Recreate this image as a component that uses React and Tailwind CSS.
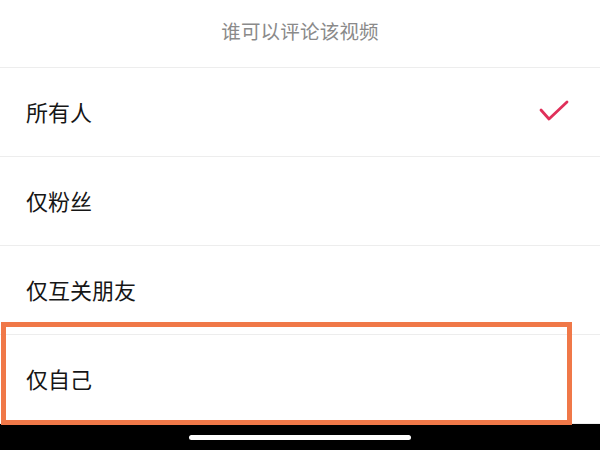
import React from "react";

const rows = ["所有人", "仅粉丝", "仅互关朋友", "仅自己"];

export default function App() {
  return (
    <div
      className="relative w-[600px] h-[450px] bg-white flex flex-col overflow-hidden"
      style={{ fontFamily: '"Noto Sans CJK SC", "Noto Sans", sans-serif' }}
    >
      <div className="h-[68px] shrink-0 flex items-center justify-center border-b border-[#ededed] pb-[5px]">
        <span className="text-[19.5px] text-[#8a8a8a] tracking-[0.2px]">谁可以评论该视频</span>
      </div>
      {rows.map((r, i) => (
        <div
          key={r}
          className="h-[89px] shrink-0 flex items-center justify-between pl-[26px] pr-[30px] border-b border-[#ededed] pb-[3px]"
        >
          <span className="text-[22px] text-[#161616] leading-none">{r}</span>
          {i === 0 && (
            <svg width="30" height="24" viewBox="0 0 30 24" className="mr-[1px]">
              <polyline
                points="2,11 10,20 28,3"
                fill="none"
                stroke="#e0305a"
                strokeWidth="2.8"
                strokeLinecap="round"
                strokeLinejoin="round"
              />
            </svg>
          )}
        </div>
      ))}
      <div className="flex-1 bg-black flex items-start justify-center pt-[11px]">
        <div className="w-[222px] h-[5px] rounded-full bg-white" />
      </div>
      <div className="absolute left-[1px] top-[322px] w-[571px] h-[103px] border-[5px] border-[#f07848]" />
    </div>
  );
}
